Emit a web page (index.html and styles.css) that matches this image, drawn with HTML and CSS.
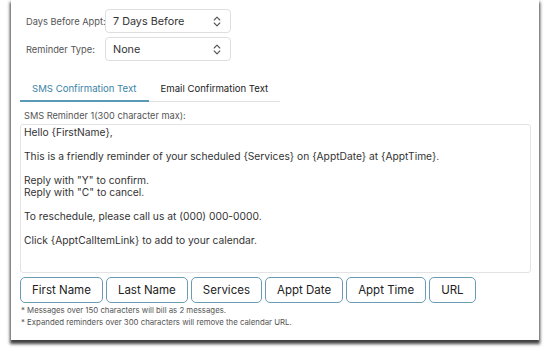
FILE: index.html
```html
<!DOCTYPE html>
<html>
<head>
<meta charset="utf-8">
<link rel="stylesheet" href="styles.css">
</head>
<body>
<div class="panel">
  <div class="form">
    <div class="row">
      <span class="label">Days Before Appt:</span>
      <div class="select"><span>7 Days Before</span>
        <svg class="chev" width="8" height="11" viewBox="0 0 8 11"><path d="M1.2 4 L4 1.2 L6.8 4 M1.2 7 L4 9.8 L6.8 7" fill="none" stroke="#555" stroke-width="1.1" stroke-linecap="round" stroke-linejoin="round"/></svg>
      </div>
    </div>
    <div class="row">
      <span class="label">Reminder Type:</span>
      <div class="select"><span>None</span>
        <svg class="chev" width="8" height="11" viewBox="0 0 8 11"><path d="M1.2 4 L4 1.2 L6.8 4 M1.2 7 L4 9.8 L6.8 7" fill="none" stroke="#555" stroke-width="1.1" stroke-linecap="round" stroke-linejoin="round"/></svg>
      </div>
    </div>
  </div>
  <div class="tabs">
    <div class="tab active">SMS Confirmation Text</div>
    <div class="tab">Email Confirmation Text</div>
  </div>
  <div class="field-label">SMS Reminder 1(300 character max):</div>
  <div class="message">Hello {FirstName},

This is a friendly reminder of your scheduled {Services} on {ApptDate} at {ApptTime}.

Reply with "Y" to confirm.
Reply with "C" to cancel.

To reschedule, please call us at (000) 000-0000.

Click {ApptCalItemLink} to add to your calendar.</div>
  <div class="buttons">
    <button class="tag">First Name</button>
    <button class="tag">Last Name</button>
    <button class="tag">Services</button>
    <button class="tag">Appt Date</button>
    <button class="tag">Appt Time</button>
    <button class="tag">URL</button>
  </div>
  <div class="notes">
    <div>* Messages over 150 characters will bill as 2 messages.</div>
    <div>* Expanded reminders over 300 characters will remove the calendar URL.</div>
  </div>
</div>
</body>
</html>
```
FILE: styles.css
```css
html, body {
  margin: 0;
  padding: 0;
  background: #ffffff;
}
body {
  font-family: Inter, "Liberation Sans", sans-serif;
  color: #333;
  width: 550px;
  height: 361px;
  overflow: hidden;
}
.panel {
  box-sizing: border-box;
  margin-left: 11px;
  width: 528px;
  height: 340px;
  background: #fff;
  box-shadow: 0 3px 3px 1px rgba(0, 0, 0, 0.75);
  padding: 9px 9px 0 9px;
}
.form {
  padding-left: 6px;
  display: flex;
  flex-direction: column;
  gap: 4px;
}
.row {
  display: flex;
  align-items: center;
}
.label {
  width: 79px;
  font-size: 9.3px;
  color: #555;
  white-space: nowrap;
}
.select {
  box-sizing: border-box;
  width: 126px;
  height: 24px;
  border: 1px solid #dedede;
  border-radius: 4px;
  display: flex;
  align-items: center;
  justify-content: space-between;
  padding: 0 9px 0 7px;
  font-size: 10.8px;
  color: #333;
}
.chev {
  display: block;
}
.tabs {
  margin-top: 17px;
  display: flex;
  width: 260px;
  border-bottom: 1px solid #e2e2e2;
}
.tab {
  height: 22px;
  padding: 0 12px;
  font-size: 9.6px;
  line-height: 22px;
  color: #222;
  margin-bottom: -1px;
  white-space: nowrap;
  border-bottom: 2px solid transparent;
}
.tab.active {
  color: #3b83a6;
  border-bottom-color: #5b9ab7;
}
.field-label {
  margin-top: 8px;
  padding-left: 4px;
  font-size: 9.2px;
  line-height: 12px;
  color: #555;
}
.message {
  box-sizing: border-box;
  margin-top: 2px;
  width: 511px;
  height: 149px;
  border: 1px solid #e3e3e3;
  border-radius: 3px;
  padding: 1px 3px;
  font-size: 10.25px;
  line-height: 12px;
  white-space: pre-line;
  color: #333;
}
.buttons {
  margin-top: 4px;
  display: flex;
  gap: 3px;
}
.tag {
  box-sizing: border-box;
  height: 26px;
  padding: 0 11px;
  background: #fff;
  border: 1.5px solid #6a9db3;
  border-radius: 5px;
  font-family: Inter, "Liberation Sans", sans-serif;
  font-size: 11.5px;
  color: #222;
}
.notes {
  margin-top: 1px;
  padding-left: 1px;
  font-size: 7.8px;
  line-height: 12px;
  color: #555;
}
```
